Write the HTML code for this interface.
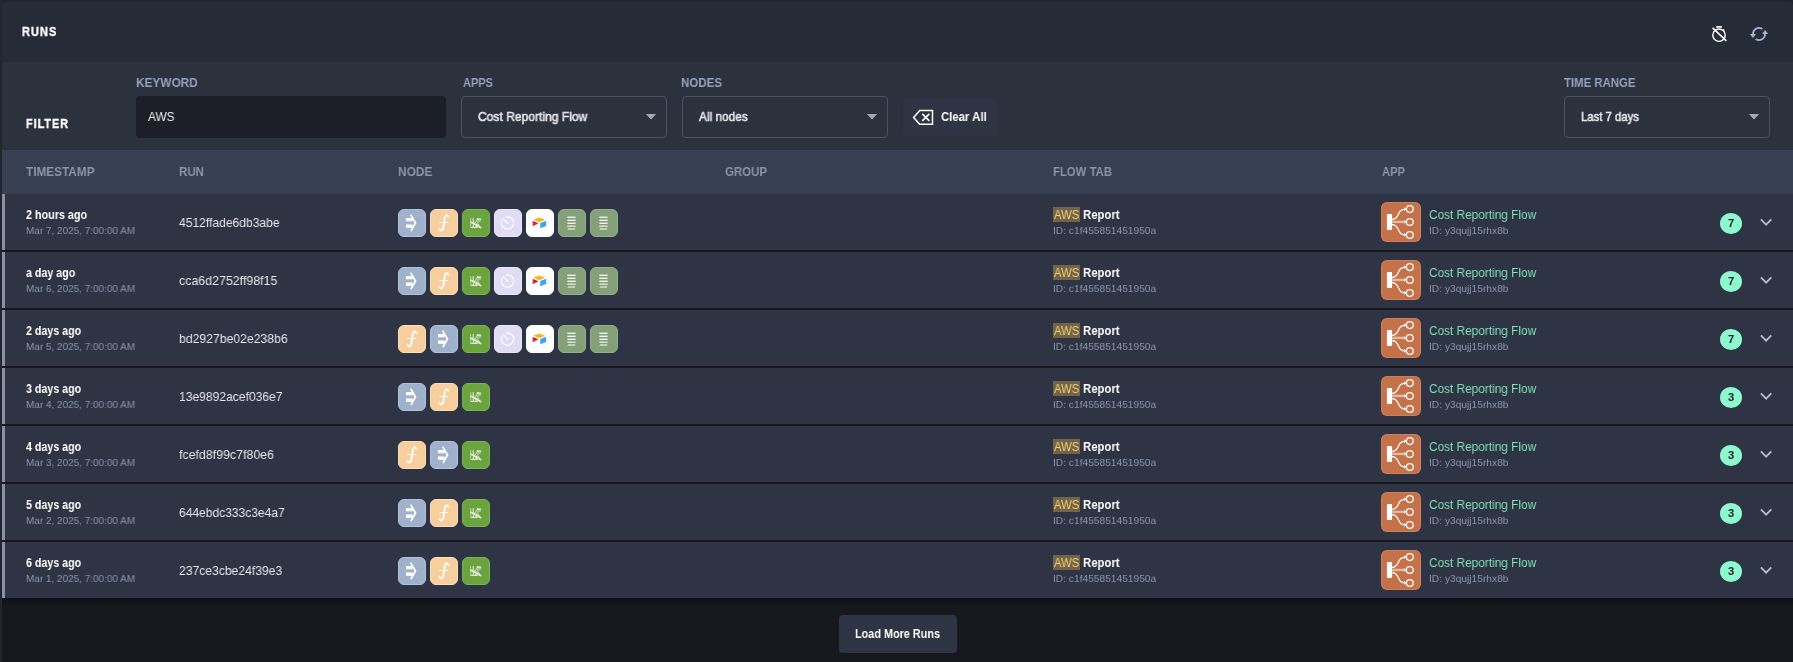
<!DOCTYPE html>
<html lang="en"><head><meta charset="utf-8"><title>Runs</title><style>
*{box-sizing:border-box}
html,body{margin:0;padding:0}
body{width:1793px;height:662px;overflow:hidden;background:#21252e;font-family:"Liberation Sans", sans-serif;position:relative}
.abs{position:absolute}
.panel{position:absolute;left:2px;top:2px;width:1791px;height:660px;border-radius:3px 3px 0 0;overflow:hidden;background:#17181d}
.hdr{position:absolute;left:0;top:0;width:100%;height:60px;background:#262b38}
.flt{position:absolute;left:0;top:60px;width:100%;height:88px;background:#2c313e}
.th{position:absolute;left:0;top:148px;width:100%;height:44px;background:#373f52}
.row{position:absolute;left:2px;width:1791px;height:56px;background:#2e3443;border-left:3px solid #8790a3}
.sep{position:absolute;left:2px;width:1791px;height:2px;background:#15171c}
.t{position:absolute;white-space:pre;line-height:1;transform-origin:0 50%;will-change:transform}
.semi{-webkit-text-stroke:0.55px currentColor}
.heavy{-webkit-text-stroke:0.4px currentColor}
.shade{position:absolute;left:2px;top:598px;width:1791px;height:9px;background:linear-gradient(#0f1014,#17181d)}
.inp{position:absolute;left:136px;top:96px;width:310px;height:42px;border-radius:4px;background:#1c1f28}
.dd{position:absolute;top:96px;height:42px;border:1px solid #4a5267;border-radius:4px}
.btn{position:absolute;border-radius:4px;background:#2e3443}
.tile{position:absolute;width:28px;height:28px;border-radius:6px;border:1px solid;overflow:hidden}
.tile svg{position:absolute;left:-1px;top:-1px}
.hl{position:absolute;width:27px;height:15px;background:#72644b}
.appic{position:absolute;width:40px;height:40px;border-radius:6px;background:#c5724a;overflow:hidden;box-shadow:inset 0 0 0 1px rgba(255,255,255,0.10)}
.badge{position:absolute;width:22px;height:21px;border-radius:50%;background:#8ef8cf}
</style></head>
<body>
<div class="panel"><div class="hdr"></div><div class="flt"></div><div class="th"></div></div>
<div class="sep" style="top:250px"></div>
<div class="sep" style="top:308px"></div>
<div class="sep" style="top:366px"></div>
<div class="sep" style="top:424px"></div>
<div class="sep" style="top:482px"></div>
<div class="sep" style="top:540px"></div>
<svg class="abs" style="left:1708px;top:23px" width="22" height="22" viewBox="0 0 22 22"><g fill="none" stroke="#fff" stroke-width="1.4"><circle cx="11" cy="12.2" r="6.2"/><path d="M8.2 3.9 H13.8" stroke-width="1.7"/><path d="M4.6 4.9 L18.3 17.9" stroke-width="1.6"/><path d="M15.2 6.4 L16.4 7.6" stroke-width="1.2"/></g></svg>
<svg class="abs" style="left:1748px;top:23px" width="22" height="22" viewBox="0 0 22 22"><g fill="none" stroke="#a5b5d1" stroke-width="1.8"><path d="M5.1 11.4 A5.9 5.9 0 0 1 14.4 6"/><path d="M16.9 10.6 A5.9 5.9 0 0 1 7.6 16"/></g><g fill="#a5b5d1"><path d="M1.9 10.9 H8 L4.9 14.9 Z"/><path d="M14 11.1 H20.1 L17.1 7.1 Z"/></g></svg>
<div class="inp"></div>
<div class="dd" style="left:461px;width:206px"></div><svg class="abs" style="left:644.6px;top:112px" width="12" height="10" viewBox="0 0 12 10"><path d="M0.8 1.9 H11.2 L6 7.5 Z" fill="#a3a7b1"/></svg>
<div class="dd" style="left:682px;width:206px"></div><svg class="abs" style="left:865.6px;top:112px" width="12" height="10" viewBox="0 0 12 10"><path d="M0.8 1.9 H11.2 L6 7.5 Z" fill="#a3a7b1"/></svg>
<div class="dd" style="left:1564px;width:206px"></div><svg class="abs" style="left:1747.6px;top:112px" width="12" height="10" viewBox="0 0 12 10"><path d="M0.8 1.9 H11.2 L6 7.5 Z" fill="#a3a7b1"/></svg>
<div class="btn" style="left:903px;top:98px;width:94px;height:38px"></div>
<svg class="abs" style="left:911px;top:107px" width="24" height="20" viewBox="0 0 24 20"><g fill="none" stroke="#fff" stroke-width="1.5"><path d="M2.6 10.4 L8.7 3.6 H21.5 V17.2 H8.7 Z" stroke-linejoin="miter"/><path d="M11.3 6.9 L18.3 13.9 M18.3 6.9 L11.3 13.9" stroke-width="1.6"/></g></svg>
<div class="shade"></div>
<div class="btn" style="left:839px;top:615px;width:118px;height:38px"></div>
<span class="t heavy" style="letter-spacing:1.2px;left:22.3px;top:25px;font-size:13.3px;font-weight:700;color:#ffffff;transform-origin:0 11px;transform:scaleX(0.8308)">RUNS</span>
<span class="t heavy" style="letter-spacing:1.2px;left:26.1px;top:117px;font-size:13.5px;font-weight:700;color:#ffffff;transform-origin:0 11px;transform:scaleX(0.8038)">FILTER</span>
<span class="t " style="left:135.8px;top:77px;font-size:12.8px;font-weight:700;color:#94a1be;transform-origin:0 10px;transform:scaleX(0.9248)">KEYWORD</span>
<span class="t " style="left:463.0px;top:77px;font-size:12.8px;font-weight:700;color:#94a1be;transform-origin:0 10px;transform:scaleX(0.8606)">APPS</span>
<span class="t " style="left:681.3px;top:77px;font-size:12.8px;font-weight:700;color:#94a1be;transform-origin:0 10px;transform:scaleX(0.9008)">NODES</span>
<span class="t " style="left:1564.3px;top:77px;font-size:12.8px;font-weight:700;color:#94a1be;transform-origin:0 10px;transform:scaleX(0.8912)">TIME RANGE</span>
<span class="t " style="left:147.8px;top:111px;font-size:12.6px;font-weight:400;color:#f0f0f2;transform-origin:0 10px;transform:scaleX(0.9421)">AWS</span>
<span class="t semi" style="left:477.7px;top:111px;font-size:12.6px;font-weight:400;color:#e6e7ea;transform-origin:0 10px;transform:scaleX(0.9580)">Cost Reporting Flow</span>
<span class="t semi" style="left:699.0px;top:111px;font-size:12.6px;font-weight:400;color:#e6e7ea;transform-origin:0 10px;transform:scaleX(0.9399)">All nodes</span>
<span class="t semi" style="left:1581.2px;top:111px;font-size:12.6px;font-weight:400;color:#e6e7ea;transform-origin:0 10px;transform:scaleX(0.9003)">Last 7 days</span>
<span class="t " style="left:940.7px;top:111px;font-size:12.6px;font-weight:700;color:#ffffff;transform-origin:0 10px;transform:scaleX(0.9024)">Clear All</span>
<span class="t " style="left:26.2px;top:165px;font-size:13.4px;font-weight:700;color:#8b95ab;transform-origin:0 11px;transform:scaleX(0.8798)">TIMESTAMP</span>
<span class="t " style="left:179.3px;top:165px;font-size:13.4px;font-weight:700;color:#8b95ab;transform-origin:0 11px;transform:scaleX(0.8616)">RUN</span>
<span class="t " style="left:397.7px;top:165px;font-size:13.4px;font-weight:700;color:#8b95ab;transform-origin:0 11px;transform:scaleX(0.8888)">NODE</span>
<span class="t " style="left:725.3px;top:165px;font-size:13.4px;font-weight:700;color:#8b95ab;transform-origin:0 11px;transform:scaleX(0.8552)">GROUP</span>
<span class="t " style="left:1053.4px;top:165px;font-size:13.4px;font-weight:700;color:#8b95ab;transform-origin:0 11px;transform:scaleX(0.8468)">FLOW TAB</span>
<span class="t " style="left:1381.5px;top:165px;font-size:13.4px;font-weight:700;color:#8b95ab;transform-origin:0 11px;transform:scaleX(0.8349)">APP</span>
<span class="t " style="left:855.0px;top:627px;font-size:13.2px;font-weight:700;color:#ffffff;transform-origin:0 11px;transform:scaleX(0.8227)">Load More Runs</span>
<div class="row" style="top:194px">
<div class="tile" style="left:393px;top:15px;background:#a0b2cb;border-color:#b3c2d7"><svg width="28" height="28" viewBox="0 0 28 28"><g fill="#fff"><rect x="8" y="9" width="6.6" height="3.3"/><rect x="8" y="15.5" width="6.6" height="3.3"/></g><path d="M12.6 5.6 L17.5 14 L12.9 22" fill="none" stroke="#fff" stroke-width="1.7" stroke-linejoin="miter"/></svg></div>
<div class="tile" style="left:425px;top:15px;background:#f7cf9f;border-color:#fbdcb6"><svg width="28" height="28" viewBox="0 0 28 28"><g fill="none" stroke="#fff" stroke-width="1.8" stroke-linecap="round"><path d="M18.3 7.7 C17.6 5.5 15.4 5.6 14.9 8.4 L13.3 18.8 C12.8 21.8 10.4 21.9 9.5 20.1"/><path d="M9.8 13.5 H17.8" stroke-width="0.9"/></g></svg></div>
<div class="tile" style="left:457px;top:15px;background:#6ba43f;border-color:#7db155"><svg width="28" height="28" viewBox="0 0 28 28"><g fill="none" stroke="#fff" stroke-width="0.9"><path d="M8.7 9 V18.4" stroke-dasharray="0.7 0.5" opacity="0.85"/><path d="M8.6 18.4 H15.6"/><path d="M11.2 9.2 V13.2"/><path d="M11.3 15.4 V18.4 M14 16.4 V18.4"/><path d="M11.8 15.3 L16.2 9.8 M14.6 10 L16.4 9.5 L16.5 11.4"/><path d="M18 9.6 V12.8 M16.9 10.8 L18 9.5 L19.1 10.8" stroke-width="0.8"/><path d="M8.8 13.2 L11.6 14.4 L18.7 18.7" stroke-width="1.5" stroke-linecap="round"/><path d="M14.8 14.4 L17.4 16.2 M15.2 13 H17.2" stroke-width="0.8"/></g></svg></div>
<div class="tile" style="left:489px;top:15px;background:#e0dcf4;border-color:#e9e6f8"><svg width="28" height="28" viewBox="0 0 28 28"><g fill="none" stroke="#fdfcff" stroke-width="1.2" stroke-linecap="round"><path d="M13.5 7.9 A6.1 6.1 0 1 1 8 11.4"/><path d="M9.2 9.6 L13.5 14.1"/></g><circle cx="13.5" cy="7.9" r="1.05" fill="#fdfcff"/><circle cx="13.5" cy="14.1" r="0.95" fill="#fdfcff"/></svg></div>
<div class="tile" style="left:521px;top:15px;background:#ffffff;border-color:#ffffff"><svg width="28" height="28" viewBox="0 0 28 28"><path d="M13.2 8.4 L18.6 10.4 Q19.2 10.8 18.6 11.1 L13.8 13.1 Q13.2 13.3 12.6 13.1 L7.8 11.1 Q7.2 10.8 7.8 10.4 Z" fill="#f7b526"/><path d="M14.2 14.1 L20.2 11.8 V16.9 L14.2 19.2 Z" fill="#3da5f5"/><path d="M6.6 12 L12.4 14.6 L6.6 17.2 Z" fill="#d92b3c"/><path d="M6.6 12 L12.4 14.6 L9 13.9 Z" fill="#a5202d"/></svg></div>
<div class="tile" style="left:553px;top:15px;background:#84a078;border-color:#94ad89"><svg width="28" height="28" viewBox="0 0 28 28"><g fill="#f1f5ef"><rect x="9.4" y="7.6" width="8.2" height="1.4"/><rect x="9.4" y="10.6" width="8.2" height="1.4"/><rect x="9.4" y="13.6" width="8.2" height="1.4"/><rect x="9.4" y="16.5" width="8.2" height="1.4" opacity="0.85"/><path d="M10.2 19.3 H17.6 L16.8 20.7 H9.4 Z" opacity="0.75"/></g></svg></div>
<div class="tile" style="left:585px;top:15px;background:#84a078;border-color:#94ad89"><svg width="28" height="28" viewBox="0 0 28 28"><g fill="#f1f5ef"><rect x="9.4" y="7.6" width="8.2" height="1.4"/><rect x="9.4" y="10.6" width="8.2" height="1.4"/><rect x="9.4" y="13.6" width="8.2" height="1.4"/><rect x="9.4" y="16.5" width="8.2" height="1.4" opacity="0.85"/><path d="M10.2 19.3 H17.6 L16.8 20.7 H9.4 Z" opacity="0.75"/></g></svg></div>
<div class="hl" style="left:1048px;top:13px"></div>
<div class="appic" style="left:1376px;top:8px"><svg width="40" height="40" viewBox="0 0 40 40"><rect x="5.9" y="12.1" width="5.2" height="15.8" rx="0.8" fill="#fff"/><g fill="none" stroke="#fff" stroke-width="1.25"><circle cx="28.8" cy="7.1" r="3.4"/><circle cx="28.8" cy="19.9" r="3.4"/><circle cx="28.8" cy="32.9" r="3.4"/><path d="M11 17.3 C19.5 17.3 15 7.1 24.6 7.1"/><path d="M11 22.7 C19.5 22.7 15 32.9 24.6 32.9"/><path d="M23 5.6 L24.9 7.1 L23 8.6 M23 18.4 L24.9 19.9 L23 21.4 M23 31.4 L24.9 32.9 L23 34.4" stroke-width="0.9"/></g><rect x="11" y="18.7" width="13" height="2.4" fill="#fff" opacity="0.5"/></svg></div>
<div class="badge" style="left:1715px;top:18.5px"></div>
<svg class="abs" style="left:1753px;top:20px" width="16" height="16" viewBox="0 0 16 16"><path d="M2.9 5.3 L8.1 10.6 L13.3 5.3" fill="none" stroke="#b4bace" stroke-width="1.9"/></svg>
<span class="t " style="left:21.2px;top:14px;font-size:13.0px;font-weight:700;color:#ffffff;transform-origin:0 11px;transform:scaleX(0.8292)">2 hours ago</span>
<span class="t " style="left:21.2px;top:32px;font-size:10.0px;font-weight:400;color:#8b96ae;transform-origin:0 8px;transform:scale(0.9953,0.8875)">Mar 7, 2025, 7:00:00 AM</span>
<span class="t " style="left:174.2px;top:22px;font-size:13.4px;font-weight:400;color:#e4e6ea;transform-origin:0 11px;transform:scaleX(0.9025)">4512ffade6db3abe</span>
<span class="t " style="left:1049.3px;top:15px;font-size:12.8px;font-weight:400;color:#f9cf6a;transform-origin:0 10px;transform:scaleX(0.8784)">AWS</span>
<span class="t " style="left:1077.7px;top:14px;font-size:13.0px;font-weight:700;color:#ffffff;transform-origin:0 11px;transform:scaleX(0.8737)">Report</span>
<span class="t " style="left:1047.8px;top:32px;font-size:10.0px;font-weight:400;color:#8b96ae;transform-origin:0 8px;transform:scale(1.0197,0.8875)">ID: c1f455851451950a</span>
<span class="t " style="left:1424.1px;top:14px;font-size:13.4px;font-weight:400;color:#7fe0b8;transform-origin:0 11px;transform:scaleX(0.8828)">Cost Reporting Flow</span>
<span class="t " style="left:1423.8px;top:32px;font-size:10.0px;font-weight:400;color:#8b96ae;transform-origin:0 8px;transform:scale(1.0215,0.8875)">ID: y3qujj15rhx8b</span>
<span class="t " style="left:1723.1px;top:24px;font-size:11.2px;font-weight:700;color:#1a1d24;transform-origin:0 9px;transform:scaleX(0.9624)">7</span>
</div>
<div class="row" style="top:252px">
<div class="tile" style="left:393px;top:15px;background:#a0b2cb;border-color:#b3c2d7"><svg width="28" height="28" viewBox="0 0 28 28"><g fill="#fff"><rect x="8" y="9" width="6.6" height="3.3"/><rect x="8" y="15.5" width="6.6" height="3.3"/></g><path d="M12.6 5.6 L17.5 14 L12.9 22" fill="none" stroke="#fff" stroke-width="1.7" stroke-linejoin="miter"/></svg></div>
<div class="tile" style="left:425px;top:15px;background:#f7cf9f;border-color:#fbdcb6"><svg width="28" height="28" viewBox="0 0 28 28"><g fill="none" stroke="#fff" stroke-width="1.8" stroke-linecap="round"><path d="M18.3 7.7 C17.6 5.5 15.4 5.6 14.9 8.4 L13.3 18.8 C12.8 21.8 10.4 21.9 9.5 20.1"/><path d="M9.8 13.5 H17.8" stroke-width="0.9"/></g></svg></div>
<div class="tile" style="left:457px;top:15px;background:#6ba43f;border-color:#7db155"><svg width="28" height="28" viewBox="0 0 28 28"><g fill="none" stroke="#fff" stroke-width="0.9"><path d="M8.7 9 V18.4" stroke-dasharray="0.7 0.5" opacity="0.85"/><path d="M8.6 18.4 H15.6"/><path d="M11.2 9.2 V13.2"/><path d="M11.3 15.4 V18.4 M14 16.4 V18.4"/><path d="M11.8 15.3 L16.2 9.8 M14.6 10 L16.4 9.5 L16.5 11.4"/><path d="M18 9.6 V12.8 M16.9 10.8 L18 9.5 L19.1 10.8" stroke-width="0.8"/><path d="M8.8 13.2 L11.6 14.4 L18.7 18.7" stroke-width="1.5" stroke-linecap="round"/><path d="M14.8 14.4 L17.4 16.2 M15.2 13 H17.2" stroke-width="0.8"/></g></svg></div>
<div class="tile" style="left:489px;top:15px;background:#e0dcf4;border-color:#e9e6f8"><svg width="28" height="28" viewBox="0 0 28 28"><g fill="none" stroke="#fdfcff" stroke-width="1.2" stroke-linecap="round"><path d="M13.5 7.9 A6.1 6.1 0 1 1 8 11.4"/><path d="M9.2 9.6 L13.5 14.1"/></g><circle cx="13.5" cy="7.9" r="1.05" fill="#fdfcff"/><circle cx="13.5" cy="14.1" r="0.95" fill="#fdfcff"/></svg></div>
<div class="tile" style="left:521px;top:15px;background:#ffffff;border-color:#ffffff"><svg width="28" height="28" viewBox="0 0 28 28"><path d="M13.2 8.4 L18.6 10.4 Q19.2 10.8 18.6 11.1 L13.8 13.1 Q13.2 13.3 12.6 13.1 L7.8 11.1 Q7.2 10.8 7.8 10.4 Z" fill="#f7b526"/><path d="M14.2 14.1 L20.2 11.8 V16.9 L14.2 19.2 Z" fill="#3da5f5"/><path d="M6.6 12 L12.4 14.6 L6.6 17.2 Z" fill="#d92b3c"/><path d="M6.6 12 L12.4 14.6 L9 13.9 Z" fill="#a5202d"/></svg></div>
<div class="tile" style="left:553px;top:15px;background:#84a078;border-color:#94ad89"><svg width="28" height="28" viewBox="0 0 28 28"><g fill="#f1f5ef"><rect x="9.4" y="7.6" width="8.2" height="1.4"/><rect x="9.4" y="10.6" width="8.2" height="1.4"/><rect x="9.4" y="13.6" width="8.2" height="1.4"/><rect x="9.4" y="16.5" width="8.2" height="1.4" opacity="0.85"/><path d="M10.2 19.3 H17.6 L16.8 20.7 H9.4 Z" opacity="0.75"/></g></svg></div>
<div class="tile" style="left:585px;top:15px;background:#84a078;border-color:#94ad89"><svg width="28" height="28" viewBox="0 0 28 28"><g fill="#f1f5ef"><rect x="9.4" y="7.6" width="8.2" height="1.4"/><rect x="9.4" y="10.6" width="8.2" height="1.4"/><rect x="9.4" y="13.6" width="8.2" height="1.4"/><rect x="9.4" y="16.5" width="8.2" height="1.4" opacity="0.85"/><path d="M10.2 19.3 H17.6 L16.8 20.7 H9.4 Z" opacity="0.75"/></g></svg></div>
<div class="hl" style="left:1048px;top:13px"></div>
<div class="appic" style="left:1376px;top:8px"><svg width="40" height="40" viewBox="0 0 40 40"><rect x="5.9" y="12.1" width="5.2" height="15.8" rx="0.8" fill="#fff"/><g fill="none" stroke="#fff" stroke-width="1.25"><circle cx="28.8" cy="7.1" r="3.4"/><circle cx="28.8" cy="19.9" r="3.4"/><circle cx="28.8" cy="32.9" r="3.4"/><path d="M11 17.3 C19.5 17.3 15 7.1 24.6 7.1"/><path d="M11 22.7 C19.5 22.7 15 32.9 24.6 32.9"/><path d="M23 5.6 L24.9 7.1 L23 8.6 M23 18.4 L24.9 19.9 L23 21.4 M23 31.4 L24.9 32.9 L23 34.4" stroke-width="0.9"/></g><rect x="11" y="18.7" width="13" height="2.4" fill="#fff" opacity="0.5"/></svg></div>
<div class="badge" style="left:1715px;top:18.5px"></div>
<svg class="abs" style="left:1753px;top:20px" width="16" height="16" viewBox="0 0 16 16"><path d="M2.9 5.3 L8.1 10.6 L13.3 5.3" fill="none" stroke="#b4bace" stroke-width="1.9"/></svg>
<span class="t " style="left:21.2px;top:14px;font-size:13.0px;font-weight:700;color:#ffffff;transform-origin:0 11px;transform:scaleX(0.8221)">a day ago</span>
<span class="t " style="left:21.2px;top:32px;font-size:10.0px;font-weight:400;color:#8b96ae;transform-origin:0 8px;transform:scale(0.9953,0.8875)">Mar 6, 2025, 7:00:00 AM</span>
<span class="t " style="left:174.2px;top:22px;font-size:13.4px;font-weight:400;color:#e4e6ea;transform-origin:0 11px;transform:scaleX(0.9263)">cca6d2752ff98f15</span>
<span class="t " style="left:1049.3px;top:15px;font-size:12.8px;font-weight:400;color:#f9cf6a;transform-origin:0 10px;transform:scaleX(0.8784)">AWS</span>
<span class="t " style="left:1077.7px;top:14px;font-size:13.0px;font-weight:700;color:#ffffff;transform-origin:0 11px;transform:scaleX(0.8737)">Report</span>
<span class="t " style="left:1047.8px;top:32px;font-size:10.0px;font-weight:400;color:#8b96ae;transform-origin:0 8px;transform:scale(1.0197,0.8875)">ID: c1f455851451950a</span>
<span class="t " style="left:1424.1px;top:14px;font-size:13.4px;font-weight:400;color:#7fe0b8;transform-origin:0 11px;transform:scaleX(0.8828)">Cost Reporting Flow</span>
<span class="t " style="left:1423.8px;top:32px;font-size:10.0px;font-weight:400;color:#8b96ae;transform-origin:0 8px;transform:scale(1.0215,0.8875)">ID: y3qujj15rhx8b</span>
<span class="t " style="left:1723.1px;top:24px;font-size:11.2px;font-weight:700;color:#1a1d24;transform-origin:0 9px;transform:scaleX(0.9624)">7</span>
</div>
<div class="row" style="top:310px">
<div class="tile" style="left:393px;top:15px;background:#f7cf9f;border-color:#fbdcb6"><svg width="28" height="28" viewBox="0 0 28 28"><g fill="none" stroke="#fff" stroke-width="1.8" stroke-linecap="round"><path d="M18.3 7.7 C17.6 5.5 15.4 5.6 14.9 8.4 L13.3 18.8 C12.8 21.8 10.4 21.9 9.5 20.1"/><path d="M9.8 13.5 H17.8" stroke-width="0.9"/></g></svg></div>
<div class="tile" style="left:425px;top:15px;background:#a0b2cb;border-color:#b3c2d7"><svg width="28" height="28" viewBox="0 0 28 28"><g fill="#fff"><rect x="8" y="9" width="6.6" height="3.3"/><rect x="8" y="15.5" width="6.6" height="3.3"/></g><path d="M12.6 5.6 L17.5 14 L12.9 22" fill="none" stroke="#fff" stroke-width="1.7" stroke-linejoin="miter"/></svg></div>
<div class="tile" style="left:457px;top:15px;background:#6ba43f;border-color:#7db155"><svg width="28" height="28" viewBox="0 0 28 28"><g fill="none" stroke="#fff" stroke-width="0.9"><path d="M8.7 9 V18.4" stroke-dasharray="0.7 0.5" opacity="0.85"/><path d="M8.6 18.4 H15.6"/><path d="M11.2 9.2 V13.2"/><path d="M11.3 15.4 V18.4 M14 16.4 V18.4"/><path d="M11.8 15.3 L16.2 9.8 M14.6 10 L16.4 9.5 L16.5 11.4"/><path d="M18 9.6 V12.8 M16.9 10.8 L18 9.5 L19.1 10.8" stroke-width="0.8"/><path d="M8.8 13.2 L11.6 14.4 L18.7 18.7" stroke-width="1.5" stroke-linecap="round"/><path d="M14.8 14.4 L17.4 16.2 M15.2 13 H17.2" stroke-width="0.8"/></g></svg></div>
<div class="tile" style="left:489px;top:15px;background:#e0dcf4;border-color:#e9e6f8"><svg width="28" height="28" viewBox="0 0 28 28"><g fill="none" stroke="#fdfcff" stroke-width="1.2" stroke-linecap="round"><path d="M13.5 7.9 A6.1 6.1 0 1 1 8 11.4"/><path d="M9.2 9.6 L13.5 14.1"/></g><circle cx="13.5" cy="7.9" r="1.05" fill="#fdfcff"/><circle cx="13.5" cy="14.1" r="0.95" fill="#fdfcff"/></svg></div>
<div class="tile" style="left:521px;top:15px;background:#ffffff;border-color:#ffffff"><svg width="28" height="28" viewBox="0 0 28 28"><path d="M13.2 8.4 L18.6 10.4 Q19.2 10.8 18.6 11.1 L13.8 13.1 Q13.2 13.3 12.6 13.1 L7.8 11.1 Q7.2 10.8 7.8 10.4 Z" fill="#f7b526"/><path d="M14.2 14.1 L20.2 11.8 V16.9 L14.2 19.2 Z" fill="#3da5f5"/><path d="M6.6 12 L12.4 14.6 L6.6 17.2 Z" fill="#d92b3c"/><path d="M6.6 12 L12.4 14.6 L9 13.9 Z" fill="#a5202d"/></svg></div>
<div class="tile" style="left:553px;top:15px;background:#84a078;border-color:#94ad89"><svg width="28" height="28" viewBox="0 0 28 28"><g fill="#f1f5ef"><rect x="9.4" y="7.6" width="8.2" height="1.4"/><rect x="9.4" y="10.6" width="8.2" height="1.4"/><rect x="9.4" y="13.6" width="8.2" height="1.4"/><rect x="9.4" y="16.5" width="8.2" height="1.4" opacity="0.85"/><path d="M10.2 19.3 H17.6 L16.8 20.7 H9.4 Z" opacity="0.75"/></g></svg></div>
<div class="tile" style="left:585px;top:15px;background:#84a078;border-color:#94ad89"><svg width="28" height="28" viewBox="0 0 28 28"><g fill="#f1f5ef"><rect x="9.4" y="7.6" width="8.2" height="1.4"/><rect x="9.4" y="10.6" width="8.2" height="1.4"/><rect x="9.4" y="13.6" width="8.2" height="1.4"/><rect x="9.4" y="16.5" width="8.2" height="1.4" opacity="0.85"/><path d="M10.2 19.3 H17.6 L16.8 20.7 H9.4 Z" opacity="0.75"/></g></svg></div>
<div class="hl" style="left:1048px;top:13px"></div>
<div class="appic" style="left:1376px;top:8px"><svg width="40" height="40" viewBox="0 0 40 40"><rect x="5.9" y="12.1" width="5.2" height="15.8" rx="0.8" fill="#fff"/><g fill="none" stroke="#fff" stroke-width="1.25"><circle cx="28.8" cy="7.1" r="3.4"/><circle cx="28.8" cy="19.9" r="3.4"/><circle cx="28.8" cy="32.9" r="3.4"/><path d="M11 17.3 C19.5 17.3 15 7.1 24.6 7.1"/><path d="M11 22.7 C19.5 22.7 15 32.9 24.6 32.9"/><path d="M23 5.6 L24.9 7.1 L23 8.6 M23 18.4 L24.9 19.9 L23 21.4 M23 31.4 L24.9 32.9 L23 34.4" stroke-width="0.9"/></g><rect x="11" y="18.7" width="13" height="2.4" fill="#fff" opacity="0.5"/></svg></div>
<div class="badge" style="left:1715px;top:18.5px"></div>
<svg class="abs" style="left:1753px;top:20px" width="16" height="16" viewBox="0 0 16 16"><path d="M2.9 5.3 L8.1 10.6 L13.3 5.3" fill="none" stroke="#b4bace" stroke-width="1.9"/></svg>
<span class="t " style="left:21.2px;top:14px;font-size:13.0px;font-weight:700;color:#ffffff;transform-origin:0 11px;transform:scaleX(0.8214)">2 days ago</span>
<span class="t " style="left:21.2px;top:32px;font-size:10.0px;font-weight:400;color:#8b96ae;transform-origin:0 8px;transform:scale(0.9953,0.8875)">Mar 5, 2025, 7:00:00 AM</span>
<span class="t " style="left:174.2px;top:22px;font-size:13.4px;font-weight:400;color:#e4e6ea;transform-origin:0 11px;transform:scaleX(0.9122)">bd2927be02e238b6</span>
<span class="t " style="left:1049.3px;top:15px;font-size:12.8px;font-weight:400;color:#f9cf6a;transform-origin:0 10px;transform:scaleX(0.8784)">AWS</span>
<span class="t " style="left:1077.7px;top:14px;font-size:13.0px;font-weight:700;color:#ffffff;transform-origin:0 11px;transform:scaleX(0.8737)">Report</span>
<span class="t " style="left:1047.8px;top:32px;font-size:10.0px;font-weight:400;color:#8b96ae;transform-origin:0 8px;transform:scale(1.0197,0.8875)">ID: c1f455851451950a</span>
<span class="t " style="left:1424.1px;top:14px;font-size:13.4px;font-weight:400;color:#7fe0b8;transform-origin:0 11px;transform:scaleX(0.8828)">Cost Reporting Flow</span>
<span class="t " style="left:1423.8px;top:32px;font-size:10.0px;font-weight:400;color:#8b96ae;transform-origin:0 8px;transform:scale(1.0215,0.8875)">ID: y3qujj15rhx8b</span>
<span class="t " style="left:1723.1px;top:24px;font-size:11.2px;font-weight:700;color:#1a1d24;transform-origin:0 9px;transform:scaleX(0.9624)">7</span>
</div>
<div class="row" style="top:368px">
<div class="tile" style="left:393px;top:15px;background:#a0b2cb;border-color:#b3c2d7"><svg width="28" height="28" viewBox="0 0 28 28"><g fill="#fff"><rect x="8" y="9" width="6.6" height="3.3"/><rect x="8" y="15.5" width="6.6" height="3.3"/></g><path d="M12.6 5.6 L17.5 14 L12.9 22" fill="none" stroke="#fff" stroke-width="1.7" stroke-linejoin="miter"/></svg></div>
<div class="tile" style="left:425px;top:15px;background:#f7cf9f;border-color:#fbdcb6"><svg width="28" height="28" viewBox="0 0 28 28"><g fill="none" stroke="#fff" stroke-width="1.8" stroke-linecap="round"><path d="M18.3 7.7 C17.6 5.5 15.4 5.6 14.9 8.4 L13.3 18.8 C12.8 21.8 10.4 21.9 9.5 20.1"/><path d="M9.8 13.5 H17.8" stroke-width="0.9"/></g></svg></div>
<div class="tile" style="left:457px;top:15px;background:#6ba43f;border-color:#7db155"><svg width="28" height="28" viewBox="0 0 28 28"><g fill="none" stroke="#fff" stroke-width="0.9"><path d="M8.7 9 V18.4" stroke-dasharray="0.7 0.5" opacity="0.85"/><path d="M8.6 18.4 H15.6"/><path d="M11.2 9.2 V13.2"/><path d="M11.3 15.4 V18.4 M14 16.4 V18.4"/><path d="M11.8 15.3 L16.2 9.8 M14.6 10 L16.4 9.5 L16.5 11.4"/><path d="M18 9.6 V12.8 M16.9 10.8 L18 9.5 L19.1 10.8" stroke-width="0.8"/><path d="M8.8 13.2 L11.6 14.4 L18.7 18.7" stroke-width="1.5" stroke-linecap="round"/><path d="M14.8 14.4 L17.4 16.2 M15.2 13 H17.2" stroke-width="0.8"/></g></svg></div>
<div class="hl" style="left:1048px;top:13px"></div>
<div class="appic" style="left:1376px;top:8px"><svg width="40" height="40" viewBox="0 0 40 40"><rect x="5.9" y="12.1" width="5.2" height="15.8" rx="0.8" fill="#fff"/><g fill="none" stroke="#fff" stroke-width="1.25"><circle cx="28.8" cy="7.1" r="3.4"/><circle cx="28.8" cy="19.9" r="3.4"/><circle cx="28.8" cy="32.9" r="3.4"/><path d="M11 17.3 C19.5 17.3 15 7.1 24.6 7.1"/><path d="M11 22.7 C19.5 22.7 15 32.9 24.6 32.9"/><path d="M23 5.6 L24.9 7.1 L23 8.6 M23 18.4 L24.9 19.9 L23 21.4 M23 31.4 L24.9 32.9 L23 34.4" stroke-width="0.9"/></g><rect x="11" y="18.7" width="13" height="2.4" fill="#fff" opacity="0.5"/></svg></div>
<div class="badge" style="left:1715px;top:18.5px"></div>
<svg class="abs" style="left:1753px;top:20px" width="16" height="16" viewBox="0 0 16 16"><path d="M2.9 5.3 L8.1 10.6 L13.3 5.3" fill="none" stroke="#b4bace" stroke-width="1.9"/></svg>
<span class="t " style="left:21.2px;top:14px;font-size:13.0px;font-weight:700;color:#ffffff;transform-origin:0 11px;transform:scaleX(0.8214)">3 days ago</span>
<span class="t " style="left:21.2px;top:32px;font-size:10.0px;font-weight:400;color:#8b96ae;transform-origin:0 8px;transform:scale(0.9953,0.8875)">Mar 4, 2025, 7:00:00 AM</span>
<span class="t " style="left:174.2px;top:22px;font-size:13.4px;font-weight:400;color:#e4e6ea;transform-origin:0 11px;transform:scaleX(0.9025)">13e9892acef036e7</span>
<span class="t " style="left:1049.3px;top:15px;font-size:12.8px;font-weight:400;color:#f9cf6a;transform-origin:0 10px;transform:scaleX(0.8784)">AWS</span>
<span class="t " style="left:1077.7px;top:14px;font-size:13.0px;font-weight:700;color:#ffffff;transform-origin:0 11px;transform:scaleX(0.8737)">Report</span>
<span class="t " style="left:1047.8px;top:32px;font-size:10.0px;font-weight:400;color:#8b96ae;transform-origin:0 8px;transform:scale(1.0197,0.8875)">ID: c1f455851451950a</span>
<span class="t " style="left:1424.1px;top:14px;font-size:13.4px;font-weight:400;color:#7fe0b8;transform-origin:0 11px;transform:scaleX(0.8828)">Cost Reporting Flow</span>
<span class="t " style="left:1423.8px;top:32px;font-size:10.0px;font-weight:400;color:#8b96ae;transform-origin:0 8px;transform:scale(1.0215,0.8875)">ID: y3qujj15rhx8b</span>
<span class="t " style="left:1723.1px;top:24px;font-size:11.2px;font-weight:700;color:#1a1d24;transform-origin:0 9px;transform:scaleX(0.9624)">3</span>
</div>
<div class="row" style="top:426px">
<div class="tile" style="left:393px;top:15px;background:#f7cf9f;border-color:#fbdcb6"><svg width="28" height="28" viewBox="0 0 28 28"><g fill="none" stroke="#fff" stroke-width="1.8" stroke-linecap="round"><path d="M18.3 7.7 C17.6 5.5 15.4 5.6 14.9 8.4 L13.3 18.8 C12.8 21.8 10.4 21.9 9.5 20.1"/><path d="M9.8 13.5 H17.8" stroke-width="0.9"/></g></svg></div>
<div class="tile" style="left:425px;top:15px;background:#a0b2cb;border-color:#b3c2d7"><svg width="28" height="28" viewBox="0 0 28 28"><g fill="#fff"><rect x="8" y="9" width="6.6" height="3.3"/><rect x="8" y="15.5" width="6.6" height="3.3"/></g><path d="M12.6 5.6 L17.5 14 L12.9 22" fill="none" stroke="#fff" stroke-width="1.7" stroke-linejoin="miter"/></svg></div>
<div class="tile" style="left:457px;top:15px;background:#6ba43f;border-color:#7db155"><svg width="28" height="28" viewBox="0 0 28 28"><g fill="none" stroke="#fff" stroke-width="0.9"><path d="M8.7 9 V18.4" stroke-dasharray="0.7 0.5" opacity="0.85"/><path d="M8.6 18.4 H15.6"/><path d="M11.2 9.2 V13.2"/><path d="M11.3 15.4 V18.4 M14 16.4 V18.4"/><path d="M11.8 15.3 L16.2 9.8 M14.6 10 L16.4 9.5 L16.5 11.4"/><path d="M18 9.6 V12.8 M16.9 10.8 L18 9.5 L19.1 10.8" stroke-width="0.8"/><path d="M8.8 13.2 L11.6 14.4 L18.7 18.7" stroke-width="1.5" stroke-linecap="round"/><path d="M14.8 14.4 L17.4 16.2 M15.2 13 H17.2" stroke-width="0.8"/></g></svg></div>
<div class="hl" style="left:1048px;top:13px"></div>
<div class="appic" style="left:1376px;top:8px"><svg width="40" height="40" viewBox="0 0 40 40"><rect x="5.9" y="12.1" width="5.2" height="15.8" rx="0.8" fill="#fff"/><g fill="none" stroke="#fff" stroke-width="1.25"><circle cx="28.8" cy="7.1" r="3.4"/><circle cx="28.8" cy="19.9" r="3.4"/><circle cx="28.8" cy="32.9" r="3.4"/><path d="M11 17.3 C19.5 17.3 15 7.1 24.6 7.1"/><path d="M11 22.7 C19.5 22.7 15 32.9 24.6 32.9"/><path d="M23 5.6 L24.9 7.1 L23 8.6 M23 18.4 L24.9 19.9 L23 21.4 M23 31.4 L24.9 32.9 L23 34.4" stroke-width="0.9"/></g><rect x="11" y="18.7" width="13" height="2.4" fill="#fff" opacity="0.5"/></svg></div>
<div class="badge" style="left:1715px;top:18.5px"></div>
<svg class="abs" style="left:1753px;top:20px" width="16" height="16" viewBox="0 0 16 16"><path d="M2.9 5.3 L8.1 10.6 L13.3 5.3" fill="none" stroke="#b4bace" stroke-width="1.9"/></svg>
<span class="t " style="left:21.2px;top:14px;font-size:13.0px;font-weight:700;color:#ffffff;transform-origin:0 11px;transform:scaleX(0.8214)">4 days ago</span>
<span class="t " style="left:21.2px;top:32px;font-size:10.0px;font-weight:400;color:#8b96ae;transform-origin:0 8px;transform:scale(0.9953,0.8875)">Mar 3, 2025, 7:00:00 AM</span>
<span class="t " style="left:174.2px;top:22px;font-size:13.4px;font-weight:400;color:#e4e6ea;transform-origin:0 11px;transform:scaleX(0.9246)">fcefd8f99c7f80e6</span>
<span class="t " style="left:1049.3px;top:15px;font-size:12.8px;font-weight:400;color:#f9cf6a;transform-origin:0 10px;transform:scaleX(0.8784)">AWS</span>
<span class="t " style="left:1077.7px;top:14px;font-size:13.0px;font-weight:700;color:#ffffff;transform-origin:0 11px;transform:scaleX(0.8737)">Report</span>
<span class="t " style="left:1047.8px;top:32px;font-size:10.0px;font-weight:400;color:#8b96ae;transform-origin:0 8px;transform:scale(1.0197,0.8875)">ID: c1f455851451950a</span>
<span class="t " style="left:1424.1px;top:14px;font-size:13.4px;font-weight:400;color:#7fe0b8;transform-origin:0 11px;transform:scaleX(0.8828)">Cost Reporting Flow</span>
<span class="t " style="left:1423.8px;top:32px;font-size:10.0px;font-weight:400;color:#8b96ae;transform-origin:0 8px;transform:scale(1.0215,0.8875)">ID: y3qujj15rhx8b</span>
<span class="t " style="left:1723.1px;top:24px;font-size:11.2px;font-weight:700;color:#1a1d24;transform-origin:0 9px;transform:scaleX(0.9624)">3</span>
</div>
<div class="row" style="top:484px">
<div class="tile" style="left:393px;top:15px;background:#a0b2cb;border-color:#b3c2d7"><svg width="28" height="28" viewBox="0 0 28 28"><g fill="#fff"><rect x="8" y="9" width="6.6" height="3.3"/><rect x="8" y="15.5" width="6.6" height="3.3"/></g><path d="M12.6 5.6 L17.5 14 L12.9 22" fill="none" stroke="#fff" stroke-width="1.7" stroke-linejoin="miter"/></svg></div>
<div class="tile" style="left:425px;top:15px;background:#f7cf9f;border-color:#fbdcb6"><svg width="28" height="28" viewBox="0 0 28 28"><g fill="none" stroke="#fff" stroke-width="1.8" stroke-linecap="round"><path d="M18.3 7.7 C17.6 5.5 15.4 5.6 14.9 8.4 L13.3 18.8 C12.8 21.8 10.4 21.9 9.5 20.1"/><path d="M9.8 13.5 H17.8" stroke-width="0.9"/></g></svg></div>
<div class="tile" style="left:457px;top:15px;background:#6ba43f;border-color:#7db155"><svg width="28" height="28" viewBox="0 0 28 28"><g fill="none" stroke="#fff" stroke-width="0.9"><path d="M8.7 9 V18.4" stroke-dasharray="0.7 0.5" opacity="0.85"/><path d="M8.6 18.4 H15.6"/><path d="M11.2 9.2 V13.2"/><path d="M11.3 15.4 V18.4 M14 16.4 V18.4"/><path d="M11.8 15.3 L16.2 9.8 M14.6 10 L16.4 9.5 L16.5 11.4"/><path d="M18 9.6 V12.8 M16.9 10.8 L18 9.5 L19.1 10.8" stroke-width="0.8"/><path d="M8.8 13.2 L11.6 14.4 L18.7 18.7" stroke-width="1.5" stroke-linecap="round"/><path d="M14.8 14.4 L17.4 16.2 M15.2 13 H17.2" stroke-width="0.8"/></g></svg></div>
<div class="hl" style="left:1048px;top:13px"></div>
<div class="appic" style="left:1376px;top:8px"><svg width="40" height="40" viewBox="0 0 40 40"><rect x="5.9" y="12.1" width="5.2" height="15.8" rx="0.8" fill="#fff"/><g fill="none" stroke="#fff" stroke-width="1.25"><circle cx="28.8" cy="7.1" r="3.4"/><circle cx="28.8" cy="19.9" r="3.4"/><circle cx="28.8" cy="32.9" r="3.4"/><path d="M11 17.3 C19.5 17.3 15 7.1 24.6 7.1"/><path d="M11 22.7 C19.5 22.7 15 32.9 24.6 32.9"/><path d="M23 5.6 L24.9 7.1 L23 8.6 M23 18.4 L24.9 19.9 L23 21.4 M23 31.4 L24.9 32.9 L23 34.4" stroke-width="0.9"/></g><rect x="11" y="18.7" width="13" height="2.4" fill="#fff" opacity="0.5"/></svg></div>
<div class="badge" style="left:1715px;top:18.5px"></div>
<svg class="abs" style="left:1753px;top:20px" width="16" height="16" viewBox="0 0 16 16"><path d="M2.9 5.3 L8.1 10.6 L13.3 5.3" fill="none" stroke="#b4bace" stroke-width="1.9"/></svg>
<span class="t " style="left:21.2px;top:14px;font-size:13.0px;font-weight:700;color:#ffffff;transform-origin:0 11px;transform:scaleX(0.8214)">5 days ago</span>
<span class="t " style="left:21.2px;top:32px;font-size:10.0px;font-weight:400;color:#8b96ae;transform-origin:0 8px;transform:scale(0.9953,0.8875)">Mar 2, 2025, 7:00:00 AM</span>
<span class="t " style="left:174.2px;top:22px;font-size:13.4px;font-weight:400;color:#e4e6ea;transform-origin:0 11px;transform:scaleX(0.8984)">644ebdc333c3e4a7</span>
<span class="t " style="left:1049.3px;top:15px;font-size:12.8px;font-weight:400;color:#f9cf6a;transform-origin:0 10px;transform:scaleX(0.8784)">AWS</span>
<span class="t " style="left:1077.7px;top:14px;font-size:13.0px;font-weight:700;color:#ffffff;transform-origin:0 11px;transform:scaleX(0.8737)">Report</span>
<span class="t " style="left:1047.8px;top:32px;font-size:10.0px;font-weight:400;color:#8b96ae;transform-origin:0 8px;transform:scale(1.0197,0.8875)">ID: c1f455851451950a</span>
<span class="t " style="left:1424.1px;top:14px;font-size:13.4px;font-weight:400;color:#7fe0b8;transform-origin:0 11px;transform:scaleX(0.8828)">Cost Reporting Flow</span>
<span class="t " style="left:1423.8px;top:32px;font-size:10.0px;font-weight:400;color:#8b96ae;transform-origin:0 8px;transform:scale(1.0215,0.8875)">ID: y3qujj15rhx8b</span>
<span class="t " style="left:1723.1px;top:24px;font-size:11.2px;font-weight:700;color:#1a1d24;transform-origin:0 9px;transform:scaleX(0.9624)">3</span>
</div>
<div class="row" style="top:542px">
<div class="tile" style="left:393px;top:15px;background:#a0b2cb;border-color:#b3c2d7"><svg width="28" height="28" viewBox="0 0 28 28"><g fill="#fff"><rect x="8" y="9" width="6.6" height="3.3"/><rect x="8" y="15.5" width="6.6" height="3.3"/></g><path d="M12.6 5.6 L17.5 14 L12.9 22" fill="none" stroke="#fff" stroke-width="1.7" stroke-linejoin="miter"/></svg></div>
<div class="tile" style="left:425px;top:15px;background:#f7cf9f;border-color:#fbdcb6"><svg width="28" height="28" viewBox="0 0 28 28"><g fill="none" stroke="#fff" stroke-width="1.8" stroke-linecap="round"><path d="M18.3 7.7 C17.6 5.5 15.4 5.6 14.9 8.4 L13.3 18.8 C12.8 21.8 10.4 21.9 9.5 20.1"/><path d="M9.8 13.5 H17.8" stroke-width="0.9"/></g></svg></div>
<div class="tile" style="left:457px;top:15px;background:#6ba43f;border-color:#7db155"><svg width="28" height="28" viewBox="0 0 28 28"><g fill="none" stroke="#fff" stroke-width="0.9"><path d="M8.7 9 V18.4" stroke-dasharray="0.7 0.5" opacity="0.85"/><path d="M8.6 18.4 H15.6"/><path d="M11.2 9.2 V13.2"/><path d="M11.3 15.4 V18.4 M14 16.4 V18.4"/><path d="M11.8 15.3 L16.2 9.8 M14.6 10 L16.4 9.5 L16.5 11.4"/><path d="M18 9.6 V12.8 M16.9 10.8 L18 9.5 L19.1 10.8" stroke-width="0.8"/><path d="M8.8 13.2 L11.6 14.4 L18.7 18.7" stroke-width="1.5" stroke-linecap="round"/><path d="M14.8 14.4 L17.4 16.2 M15.2 13 H17.2" stroke-width="0.8"/></g></svg></div>
<div class="hl" style="left:1048px;top:13px"></div>
<div class="appic" style="left:1376px;top:8px"><svg width="40" height="40" viewBox="0 0 40 40"><rect x="5.9" y="12.1" width="5.2" height="15.8" rx="0.8" fill="#fff"/><g fill="none" stroke="#fff" stroke-width="1.25"><circle cx="28.8" cy="7.1" r="3.4"/><circle cx="28.8" cy="19.9" r="3.4"/><circle cx="28.8" cy="32.9" r="3.4"/><path d="M11 17.3 C19.5 17.3 15 7.1 24.6 7.1"/><path d="M11 22.7 C19.5 22.7 15 32.9 24.6 32.9"/><path d="M23 5.6 L24.9 7.1 L23 8.6 M23 18.4 L24.9 19.9 L23 21.4 M23 31.4 L24.9 32.9 L23 34.4" stroke-width="0.9"/></g><rect x="11" y="18.7" width="13" height="2.4" fill="#fff" opacity="0.5"/></svg></div>
<div class="badge" style="left:1715px;top:18.5px"></div>
<svg class="abs" style="left:1753px;top:20px" width="16" height="16" viewBox="0 0 16 16"><path d="M2.9 5.3 L8.1 10.6 L13.3 5.3" fill="none" stroke="#b4bace" stroke-width="1.9"/></svg>
<span class="t " style="left:21.2px;top:14px;font-size:13.0px;font-weight:700;color:#ffffff;transform-origin:0 11px;transform:scaleX(0.8214)">6 days ago</span>
<span class="t " style="left:21.2px;top:32px;font-size:10.0px;font-weight:400;color:#8b96ae;transform-origin:0 8px;transform:scale(0.9953,0.8875)">Mar 1, 2025, 7:00:00 AM</span>
<span class="t " style="left:174.2px;top:22px;font-size:13.4px;font-weight:400;color:#e4e6ea;transform-origin:0 11px;transform:scaleX(0.9058)">237ce3cbe24f39e3</span>
<span class="t " style="left:1049.3px;top:15px;font-size:12.8px;font-weight:400;color:#f9cf6a;transform-origin:0 10px;transform:scaleX(0.8784)">AWS</span>
<span class="t " style="left:1077.7px;top:14px;font-size:13.0px;font-weight:700;color:#ffffff;transform-origin:0 11px;transform:scaleX(0.8737)">Report</span>
<span class="t " style="left:1047.8px;top:32px;font-size:10.0px;font-weight:400;color:#8b96ae;transform-origin:0 8px;transform:scale(1.0197,0.8875)">ID: c1f455851451950a</span>
<span class="t " style="left:1424.1px;top:14px;font-size:13.4px;font-weight:400;color:#7fe0b8;transform-origin:0 11px;transform:scaleX(0.8828)">Cost Reporting Flow</span>
<span class="t " style="left:1423.8px;top:32px;font-size:10.0px;font-weight:400;color:#8b96ae;transform-origin:0 8px;transform:scale(1.0215,0.8875)">ID: y3qujj15rhx8b</span>
<span class="t " style="left:1723.1px;top:24px;font-size:11.2px;font-weight:700;color:#1a1d24;transform-origin:0 9px;transform:scaleX(0.9624)">3</span>
</div>
</body></html>
